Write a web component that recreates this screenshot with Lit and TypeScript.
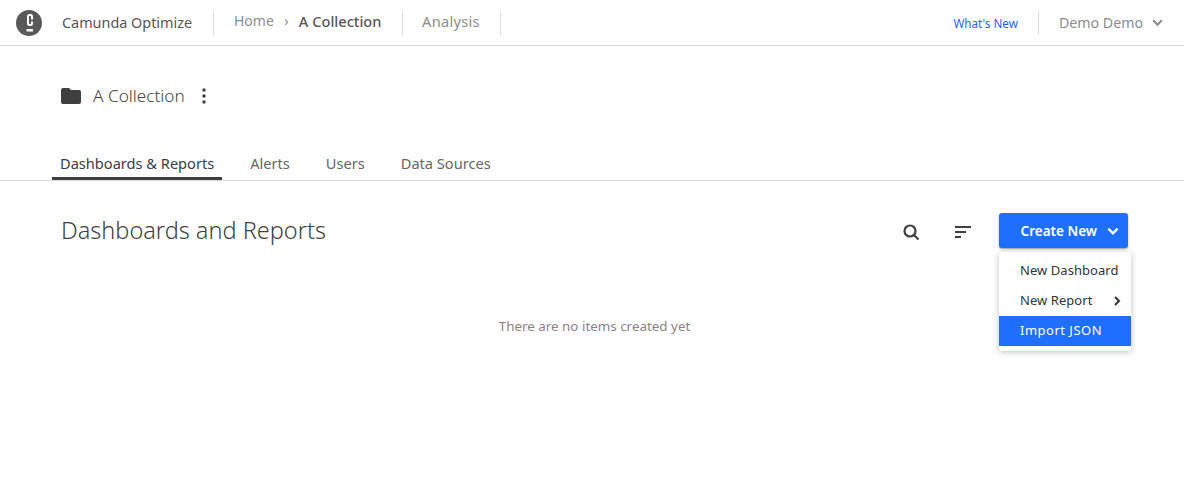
import { LitElement, html, css, svg } from "lit";
import { customElement } from "lit/decorators.js";

const chevronDown = (size: number) => svg`<svg width=${size} height=${size} viewBox="0 0 12 12" fill="none" stroke="currentColor" stroke-width="2"><path d="M2 4l4 4 4-4"/></svg>`;

@customElement("app-root")
class AppRoot extends LitElement {
  static styles = css`
    :host {
      display: block;
      height: 493px;
      background: #fff;
      font-family: "Noto Sans", "Open Sans", sans-serif;
      color: #333;
      overflow: hidden;
    }
    .header {
      display: flex;
      align-items: center;
      height: 45px;
      border-bottom: 1px solid #d9d9d9;
      padding-left: 16px;
    }
    .logo { display: block; margin-right: 20px; flex: none; }
    .brand { font-size: 14.4px; color: #555; width: 151px; flex: none; }
    .sep { width: 1px; height: 24px; background: #ddd; flex: none; }
    .crumbs { display: flex; align-items: center; font-size: 14px; padding-left: 20px; width: 168px; color: #8c8c8c; margin-top: -4px; }
    .crumbs i { font-style: normal; font-size: 14px; width: 25px; text-align: center; }
    .crumbs b { font-weight: 500; font-size: 14.6px; color: #555; }
    .nav { font-size: 14.6px; letter-spacing: .3px; color: #8c8c8c; padding: 0 20px 0 19px; margin-top: -4px; width: 58px; white-space: nowrap; }
    .spacer { flex: 1; }
    .news { font-size: 11.7px; color: #1f62ff; margin-right: 20px; }
    .user { display: flex; align-items: center; font-size: 14.2px; color: #8c8c8c; padding-left: 20px; margin-right: 20px; gap: 8px; }
    .title-row { display: flex; align-items: center; padding: 38px 0 0 60px; height: 24px; }
    .title-row .name { font-size: 17.2px; font-weight: 300; color: #444; margin: 0 0 2px 11px; }
    .dots { margin-left: 9px; display: block; }
    .tabs { display: flex; margin-top: 36px; padding-left: 52px; height: 36px; border-bottom: 1px solid #d9d9d9; }
    .tab { font-size: 14.6px; color: #666; padding: 6px 8px 0; margin-right: 20px; height: 27px; line-height: 26px; border-bottom: 3px solid transparent; }
    .tab.active { color: #3b3b46; border-bottom-color: #3f3f3f; }
    .list-head { display: flex; align-items: center; padding: 32px 56px 0 61px; height: 35px; position: relative; }
    h1 { font-size: 23.5px; font-weight: 300; color: #3f3f3f; margin: -1px 0 0; flex: 1; }
    .tool { display: block; margin: 3px 27px 0 0; flex: none; }
    .tool.search { margin-right: 34px; }
    .create {
      display: flex; align-items: center; justify-content: flex-end; width: 129px; height: 35px; box-sizing: border-box;
      background: #1f6fff; border-radius: 3px; color: #fff; font-size: 13.5px; font-weight: 600;
      padding-right: 8px; gap: 9px; box-shadow: 0 1px 2px rgba(0,0,0,.4);
    }
    .menu {
      position: absolute; top: 71px; right: 53px; width: 132px; padding: 4px 0 5px; background: #fff;
      box-shadow: 0 1px 6px rgba(0,0,0,.25); border-radius: 3px; font-size: 13px; letter-spacing: .05px; color: #333;
    }
    .item { height: 30px; line-height: 28px; padding-left: 21px; position: relative; }
    .item.sel { background: #1f6fff; color: #fff; letter-spacing: .5px; }
    .arrow { position: absolute; right: 9px; top: 10px; display: block; }
    .empty { text-align: center; font-size: 13.4px; color: #8c8282; margin-top: 69px; padding-left: 5px; }
  `;

  render() {
    return html`
      <div class="header">
        <svg class="logo" width="26" height="26" viewBox="0 0 26 26">
          <circle cx="13" cy="13" r="13" fill="#595959" />
          <path d="M16 9.500V6.500Q16 5 14.500 5H13.500Q12 5 12 6.500V13.500Q12 15 13.500 15H14.500Q16 15 16 13.500V11.500" fill="none" stroke="#fff" stroke-width="2" />
          <rect x="10.500" y="19" width="6.500" height="2.500" fill="#fff" />
        </svg>
        <span class="brand">Camunda Optimize</span>
        <span class="sep"></span>
        <div class="crumbs"><span>Home</span><i>›</i><b>A Collection</b></div>
        <span class="sep"></span>
        <span class="nav">Analysis</span>
        <span class="sep"></span>
        <span class="spacer"></span>
        <span class="news">What's New</span>
        <span class="sep"></span>
        <div class="user"><span>Demo Demo</span>${chevronDown(13)}</div>
      </div>
      <div class="title-row">
        <svg width="22" height="18" viewBox="0 0 22 18"><path d="M1 3q0-2 2-2h6l2 2h8q2 0 2 2v10q0 2-2 2H3q-2 0-2-2z" fill="#3f3f3f" /></svg>
        <span class="name">A Collection</span>
        <svg class="dots" width="20" height="20" viewBox="0 0 20 20" fill="#3f3f3f"><circle cx="10" cy="4" r="1.700" /><circle cx="10" cy="10" r="1.700" /><circle cx="10" cy="16" r="1.700" /></svg>
      </div>
      <div class="tabs">
        <div class="tab active">Dashboards &amp; Reports</div>
        <div class="tab">Alerts</div>
        <div class="tab">Users</div>
        <div class="tab">Data Sources</div>
      </div>
      <div class="list-head">
        <h1>Dashboards and Reports</h1>
        <svg class="tool search" width="18" height="18" viewBox="0 0 18 18" fill="none" stroke="#3f3f3f" stroke-width="2.200"><circle cx="8" cy="8" r="5.500" /><path d="M12 12l4.500 4.500" /></svg>
        <svg class="tool" width="18" height="18" viewBox="0 0 18 18" fill="#3f3f3f"><rect x="1" y="3" width="16" height="2" /><rect x="1" y="8" width="11" height="2" /><rect x="1" y="13" width="6" height="2" /></svg>
        <div class="create"><span>Create New</span>${chevronDown(14)}</div>
        <div class="menu">
          <div class="item">New Dashboard</div>
          <div class="item">New Report<svg class="arrow" width="10" height="10" viewBox="0 0 10 10" fill="none" stroke="#333" stroke-width="2"><path d="M3 1l4 4-4 4" /></svg></div>
          <div class="item sel">Import JSON</div>
        </div>
      </div>
      <div class="empty">There are no items created yet</div>
    `;
  }
}

export default AppRoot;
